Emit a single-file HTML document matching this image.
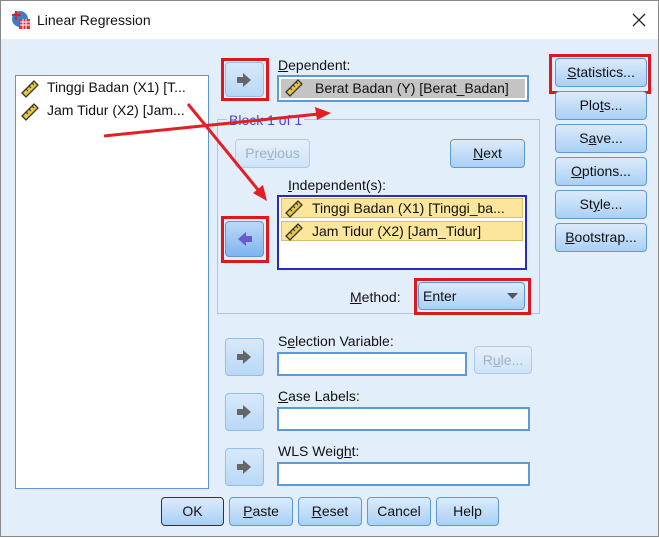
<!DOCTYPE html><html><head><style>
*{box-sizing:border-box}body{margin:0;width:659px;height:537px;overflow:hidden;font-family:"Liberation Sans",sans-serif;font-size:14px;color:#111}
.win{position:absolute;left:0;top:0;width:659px;height:537px;border:1px solid #888;background:#e3eefb}
.title{position:absolute;left:0;top:0;width:657px;height:38px;background:#fff}
.a{position:absolute}
.btn{position:absolute;border:1px solid #5c9ad6;border-radius:4px;background:linear-gradient(#dcebfb,#a9d0f5);text-align:center;font-size:14px;line-height:26px}
.dis{border-color:#a9cdf0;background:linear-gradient(#e6f0fb,#cfe3f8);color:#9fb1c4}
.field{position:absolute;background:#fff;border:2px solid #5c9ad6}
.red{position:absolute;border:3px solid #e0161e}
.arr{position:absolute;border:1px solid #8fbfec;border-radius:4px;background:linear-gradient(#d8e9fb,#b8d8f6)}
u{text-decoration:underline}
.row{position:absolute;height:20px;background:#fbe69b;border:1px solid #d6bd68;font-size:14px;line-height:18px;padding-left:30px;white-space:nowrap;overflow:hidden}
.ico{position:absolute;left:5px;top:3px}
</style></head><body><div class="win">
<div class="title"></div>
<svg class="a" style="left:10px;top:9px" width="20" height="20"><circle cx="9" cy="9" r="8" fill="#3b7fc4"/><rect x="8" y="9" width="11" height="10" fill="#d33"/><path d="M9 12h10M9 15h10M12 9v10M15 9v10" stroke="#fff" stroke-width="1"/><path d="M5 1v9M1 5h9" stroke="#d22" stroke-width="2"/></svg>
<div class="a" style="left:36px;top:11px;font-size:14px">Linear Regression</div>
<svg class="a" style="left:631px;top:12px" width="14" height="14"><path d="M1 1L13 13M13 1L1 13" stroke="#222" stroke-width="1.3"/></svg>

<div class="field" style="left:14px;top:74px;width:194px;height:414px;border-width:1px"></div>
<div class="row" style="left:16px;top:77px;width:190px;background:none;border:none">Tinggi Badan (X1) [T...</div>
<div class="row" style="left:16px;top:100px;width:190px;background:none;border:none">Jam Tidur (X2) [Jam...</div>

<div class="red" style="left:220px;top:57px;width:48px;height:43px"></div>
<div class="arr" style="left:224px;top:61px;width:39px;height:35px"></div>
<div class="a" style="left:277px;top:56px"><u>D</u>ependent:</div>
<div class="field" style="left:276px;top:74px;width:252px;height:27px;padding:2px"><div style="background:#c4c4c4;height:100%;line-height:19px;padding-left:34px">Berat Badan (Y) [Berat_Badan]</div></div>

<div class="a" style="left:216px;top:118px;width:323px;height:195px;border:1px solid #a8c6e6"></div>
<div class="a" style="left:226px;top:111px;background:#e3eefb;color:#4848c8;padding:0 2px">Block 1 of 1</div>
<div class="btn dis" style="left:234px;top:138px;width:75px;height:29px">Pre<u>v</u>ious</div>
<div class="btn" style="left:449px;top:138px;width:75px;height:29px"><u>N</u>ext</div>
<div class="a" style="left:287px;top:176px"><u>I</u>ndependent(s):</div>
<div class="field" style="left:276px;top:194px;width:250px;height:75px;border-color:#2a2ac0"></div>
<div class="row" style="left:280px;top:197px;width:242px">Tinggi Badan (X1) [Tinggi_ba...</div>
<div class="row" style="left:280px;top:220px;width:242px">Jam Tidur (X2) [Jam_Tidur]</div>
<div class="red" style="left:220px;top:215px;width:48px;height:47px"></div>
<div class="arr" style="left:224px;top:220px;width:39px;height:36px;background:linear-gradient(#bcd9f8,#7fb5ee);border-color:#5c9ad6"></div>
<div class="a" style="left:349px;top:288px"><u>M</u>ethod:</div>
<div class="red" style="left:413px;top:277px;width:117px;height:37px"></div>
<div class="btn" style="left:417px;top:281px;width:107px;height:28px;text-align:left;padding-left:4px">Enter<svg class="a" style="left:88px;top:10px" width="11" height="6"><path d="M0 0h11L5.5 6z" fill="#555"/></svg></div>

<div class="arr" style="left:224px;top:337px;width:39px;height:38px"></div>
<div class="a" style="left:277px;top:332px">S<u>e</u>lection Variable:</div>
<div class="field" style="left:276px;top:351px;width:190px;height:24px"></div>
<div class="btn dis" style="left:473px;top:345px;width:58px;height:28px">R<u>u</u>le...</div>
<div class="arr" style="left:224px;top:392px;width:39px;height:38px"></div>
<div class="a" style="left:277px;top:387px"><u>C</u>ase Labels:</div>
<div class="field" style="left:276px;top:406px;width:253px;height:24px"></div>
<div class="arr" style="left:224px;top:447px;width:39px;height:38px"></div>
<div class="a" style="left:277px;top:442px">WLS Weig<u>h</u>t:</div>
<div class="field" style="left:276px;top:461px;width:253px;height:24px"></div>

<div class="btn" style="left:160px;top:496px;width:63px;height:29px;border-color:#333">OK</div>
<div class="btn" style="left:228px;top:496px;width:64px;height:29px"><u>P</u>aste</div>
<div class="btn" style="left:297px;top:496px;width:64px;height:29px"><u>R</u>eset</div>
<div class="btn" style="left:366px;top:496px;width:64px;height:29px">Cancel</div>
<div class="btn" style="left:435px;top:496px;width:63px;height:29px">Help</div>

<div class="red" style="left:548px;top:53px;width:102px;height:40px"></div>
<div class="btn" style="left:554px;top:57px;width:92px;height:29px"><u>S</u>tatistics...</div>
<div class="btn" style="left:554px;top:90px;width:92px;height:29px">Plo<u>t</u>s...</div>
<div class="btn" style="left:554px;top:123px;width:92px;height:29px">S<u>a</u>ve...</div>
<div class="btn" style="left:554px;top:156px;width:92px;height:29px"><u>O</u>ptions...</div>
<div class="btn" style="left:554px;top:189px;width:92px;height:29px">St<u>y</u>le...</div>
<div class="btn" style="left:554px;top:222px;width:92px;height:29px"><u>B</u>ootstrap...</div>

<svg class="a" style="left:0;top:0" width="659" height="537">
<defs><g id="r"><path d="M1 13L13 1l4 4L5 17z" fill="#e8c640" stroke="#333" stroke-width="1.3"/><path d="M5 9l2 2M8 6l2 2M11 3l2 2" stroke="#333"/></g>
<path id="ar" d="M0 -3h6v-4l8 7-8 7v-4H0z"/></defs>
<use href="#r" x="20" y="79"/><use href="#r" x="20" y="102"/><use href="#r" x="284" y="78"/>
<use href="#r" x="284" y="199"/><use href="#r" x="284" y="222"/>
<use href="#ar" x="236" y="79" fill="#666"/>
<use href="#ar" x="236" y="356" fill="#666"/><use href="#ar" x="236" y="411" fill="#666"/><use href="#ar" x="236" y="466" fill="#666"/>
<use href="#ar" transform="translate(251 238) scale(-1 1)" fill="#6a5ad0"/>
<g stroke="#e51e25" stroke-width="3" fill="#e51e25"><path d="M103 135L318 113"/><path d="M330 112l-16 -6 2 13z" stroke="none"/>
<path d="M187 103L258 190"/><path d="M266 200l-4-16-10 8z" stroke="none"/></g>
</svg>
</div></body></html>
